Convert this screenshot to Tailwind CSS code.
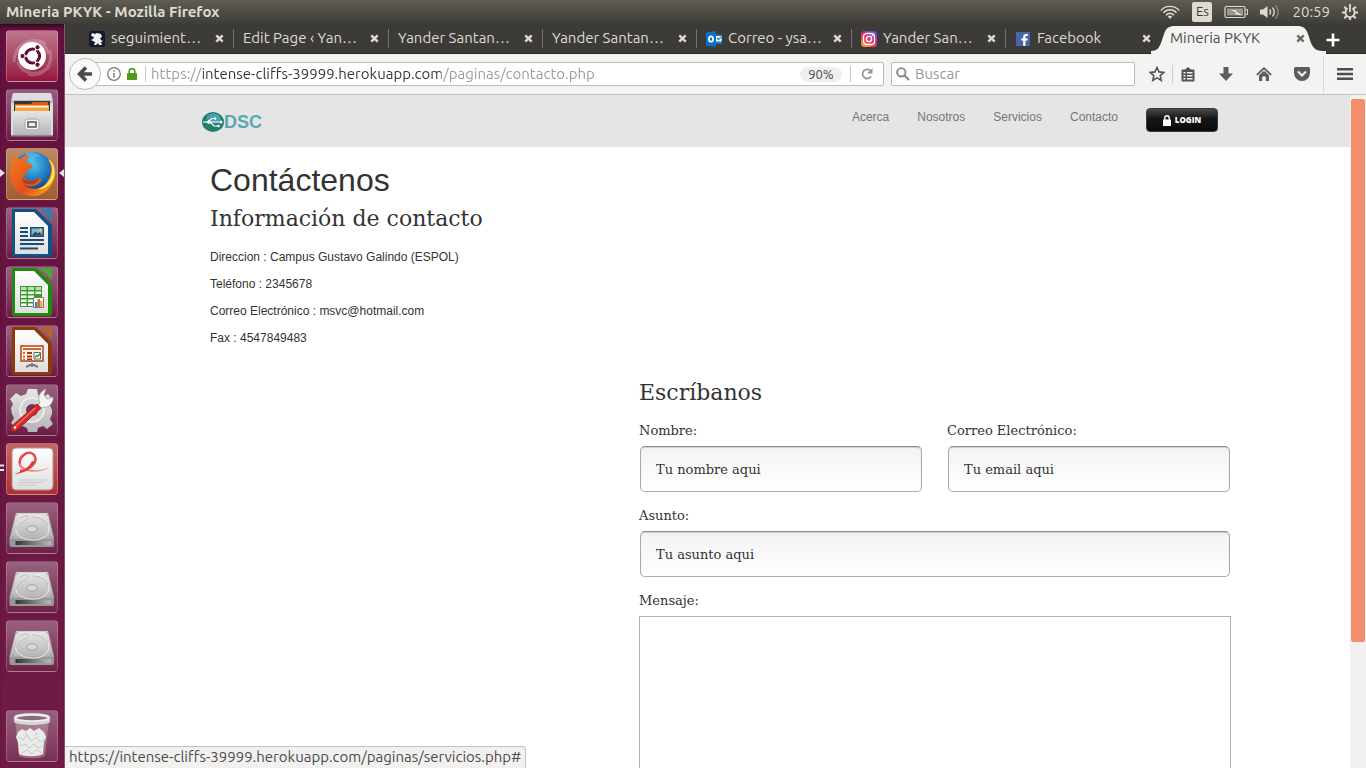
<!DOCTYPE html>
<html lang="es">
<head>
<meta charset="utf-8">
<title>Mineria PKYK</title>
<script src="https://cdn.jsdelivr.net/npm/@tailwindcss/browser@4"></script>
</head>
<body class="flex h-screen flex-col overflow-hidden bg-white font-['Ubuntu','Noto_Sans',sans-serif] text-[15px] text-[#4c4c4c]">

<!-- shared drawings -->
<svg class="absolute h-0 w-0" aria-hidden="true">
  <defs>
    <linearGradient id="metal" x1="0" y1="0" x2="0" y2="1"><stop offset="0" stop-color="#e6e6e6"/><stop offset="1" stop-color="#b4b4b4"/></linearGradient>
    <linearGradient id="paper" x1="0" y1="0" x2="0" y2="1"><stop offset="0" stop-color="#ffffff"/><stop offset="1" stop-color="#dedede"/></linearGradient>
    <linearGradient id="edge" x1="0" y1="0" x2="1" y2="0"><stop offset="0" stop-color="#333"/><stop offset="0.5" stop-color="#777"/><stop offset="1" stop-color="#bbb"/></linearGradient>
    <radialGradient id="globe" cx="0.5" cy="0.3" r="0.7"><stop offset="0" stop-color="#4fc3ee"/><stop offset="0.6" stop-color="#1a6fb5"/><stop offset="1" stop-color="#0b2f66"/></radialGradient>
    <linearGradient id="fox" x1="0" y1="0" x2="1" y2="1"><stop offset="0" stop-color="#f47c20"/><stop offset="0.6" stop-color="#e2501a"/><stop offset="1" stop-color="#f9c21c"/></linearGradient>
    <linearGradient id="insta" x1="0" y1="1" x2="0.7" y2="0"><stop offset="0" stop-color="#fdc24a"/><stop offset="0.35" stop-color="#f0533f"/><stop offset="0.65" stop-color="#d62c8e"/><stop offset="1" stop-color="#5b4fd0"/></linearGradient>
    <symbol id="disk" viewBox="0 0 52 52">
      <path d="M10 11h32l6 26H3.500z" fill="url(#metal)" stroke="#8f8f8f" stroke-width="0.500"/>
      <path d="M3.500 37H48v6c0 1-.5 2-2 2H5.500c-1.500 0-2-1-2-2z" fill="#989898"/>
      <path d="M9.500 39H45v4H9.500z" fill="url(#edge)"/>
      <path d="M14 15c6-4 9-2 8 0-1 3-11 4-12 12-1 7 8 11 17 11 12 0 18-7 15-15-2-6-8-9-15-9" fill="none" stroke="#efefef" stroke-width="1"/>
      <path d="M14 16c6-4 9-2 8 0-1 3-11 4-12 12M42 24c-2-6-8-9-15-9" fill="none" stroke="#aaa" stroke-width="0.700"/>
      <ellipse cx="26" cy="27" rx="5.500" ry="3.200" fill="#d8d8d8" stroke="#a2a2a2"/>
      <circle cx="7" cy="35" r="0.800" fill="#888"/><circle cx="45" cy="35" r="0.800" fill="#888"/><circle cx="11" cy="13" r="0.700" fill="#888"/><circle cx="41" cy="13" r="0.700" fill="#888"/>
    </symbol>
    <symbol id="cross" viewBox="0 0 9 9"><path d="M1.300 1.300l6.400 6.400M7.700 1.300L1.300 7.700" stroke="currentColor" stroke-width="2.400" fill="none"/></symbol>
  </defs>
</svg>

<!-- system panel -->
<header class="flex h-6 shrink-0 items-center bg-linear-to-b from-[#5f5d52] to-[#3e3d38] pl-[6px] pr-2 text-[#dfdbd2]">
  <h1 class="flex-1 text-[15px] leading-6 font-bold">Mineria PKYK - Mozilla Firefox</h1>
  <div class="flex items-center">
    <svg class="mr-3 h-4 w-5" viewBox="0 0 20 16" fill="none" stroke="#dfdbd2" stroke-width="1.500" role="img" aria-label="Wi-Fi"><path d="M.8 6.500C5.500 1 14.500 1 19.200 6.500" stroke-width="1.200"/><path d="M3.500 8.800c3.600-4 9.400-4 13 0"/><path d="M6 11.200c2.400-2.600 5.600-2.600 8 0"/><path d="M7.800 12.600c1.500-1.400 2.900-1.400 4.400 0L10 15z" fill="#dfdbd2" stroke="none"/></svg>
    <span class="mr-3 flex h-5 w-5 items-center justify-center rounded-[2px] bg-[#dfdbd2] text-[13px] text-[#3c3b37]">Es</span>
    <svg class="mr-3 h-4 w-6" viewBox="0 0 24 16" role="img" aria-label="Batería"><rect x="1" y="2.500" width="20" height="11" rx="1.500" fill="none" stroke="#dfdbd2" stroke-width="1.200"/><path d="M22 5.500h1.500v5H22" fill="none" stroke="#dfdbd2"/><path d="M3 4.500h16v7H3z" fill="#99968d"/><path d="M6 5.500l7 1.200-1 1.300 7 3.500-8-1.600 1.200-1.600z" fill="#fff"/></svg>
    <svg class="mr-3 h-4 w-5" viewBox="0 0 20 16" fill="none" stroke="#dfdbd2" stroke-width="1.400" role="img" aria-label="Volumen"><path d="M0 5.500h3L7.500 2v12L3 10.500H0z" fill="#dfdbd2" stroke="none"/><path d="M9.500 5.500c1.300 1.600 1.300 3.400 0 5M12.500 3.500c2.200 2.800 2.200 6.200 0 9"/><path d="M15.500 1.500c3.300 4 3.300 9 0 13" stroke="#8c897f"/></svg>
    <time class="mr-3">20:59</time>
    <svg class="h-4 w-4" viewBox="0 0 16 16" role="img" aria-label="Sistema"><g stroke="#dfdbd2" stroke-width="2.200"><path d="M8 13v3M0 8.500h3M13 8.500h3M2.300 14.200l2.200-2.200M13.700 14.200L11.500 12M2.300 2.800L4.500 5M13.700 2.800L11.500 5"/></g><path d="M5.600 4.600a4.600 4.600 0 1 0 4.800 0" fill="none" stroke="#dfdbd2" stroke-width="1.800"/><path d="M8 0v8" stroke="#dfdbd2" stroke-width="1.800"/></svg>
  </div>
</header>

<div class="flex min-h-0 flex-1">

<!-- launcher -->
<nav aria-label="Lanzador" class="flex w-[65px] shrink-0 flex-col justify-between border-r border-[#8b5278] bg-linear-to-b from-[#64113f] to-[#6f1b45] pt-[6px] pb-[6px] pl-[6px] shadow-[inset_0_5px_5px_-3px_#2c061b]">
  <div class="flex flex-col gap-[7px]">
    <a href="#" aria-label="Inicio" class="block h-[52px] w-[52px] rounded border border-white/25 bg-linear-to-b from-[#bd7590] to-[#96123f]">
      <svg viewBox="1 1 50 50"><path d="M8 32C8 16 24 5 40 14M13 20C20 8 38 8 43 24M44 20c4 16-8 28-22 24M12 32c4 12 20 16 32 4" fill="none" stroke="#fff" stroke-opacity=".22" stroke-width="3"/><circle cx="26" cy="26" r="14" fill="#fff"/><circle cx="26.500" cy="26" r="7" fill="none" stroke="#5e1036" stroke-width="3.200"/><path d="M26 26H16M26 26l5.500-9M26 26l5.500 9" stroke="#fff" stroke-width="1.500"/><circle cx="26.500" cy="26" r="5.200" fill="#fff"/><g fill="#5e1036" stroke="#fff" stroke-width="1"><circle cx="16.500" cy="26" r="2.600"/><circle cx="31.500" cy="17.300" r="2.600"/><circle cx="31.500" cy="34.700" r="2.600"/></g></svg>
    </a>
    <a href="#" aria-label="Archivos" class="block h-[52px] w-[52px] rounded border border-white/20 bg-linear-to-b from-[#9a5f80] to-[#6b1a47]">
      <svg viewBox="1 1 50 50"><path d="M7 4h38l2 8v34H5V12z" fill="#dedede"/><path d="M5 11h42v3H5z" fill="#bcbcbc"/><path d="M8 12h36v11H8z" fill="#3a3835"/><path d="M9 15h16l2-2h15v9H9z" fill="#cf5f22"/><path d="M9 16h34v6H9z" fill="#f2a443"/><path d="M10 17h32v1.500H10z" fill="#fff3d8"/><path d="M7 22h38v25H7z" fill="url(#metal)"/><path d="M5 46h42v1.500H5z" fill="#8a8a8a"/><rect x="19" y="30" width="14" height="11" rx="2.500" fill="#f1f1f1" stroke="#a5a5a5"/><rect x="22" y="33" width="8" height="5" fill="#eee" stroke="#555" stroke-width="1.500"/></svg>
    </a>
    <div class="relative h-[52px] w-[52px]">
      <a href="#" aria-label="Firefox" class="block h-[52px] w-[52px] rounded border border-white/25 bg-linear-to-b from-[#bd8a63] to-[#a05c30]">
        <svg viewBox="1 1 50 50"><circle cx="27" cy="25" r="21" fill="url(#globe)"/><path d="M20 5c6-2 13 0 15 4-5-1-8 2-6 5-4 1-6-2-9-2z" fill="#67d0f2" opacity=".5"/><path d="M7 12c0-2 1-4 2-5 1 3 3 4 6 4 2-3 5-4 9-3-3 2-4 5-3 7l6 2c0 3-3 3-5 5-1 3-3 4-4 6 1 6 10 6 16 2 2 1 2 2 0 4-5 6-15 6-19-1 5 9 20 11 26 1 5-7 5-16 1-23 6 4 8 13 6 20-3 10-11 17-21 17C13 48 4 39 4 27c0-6 1-11 3-15z" fill="url(#fox)"/><path d="M42 11c4 5 5 11 3 17-2 7-8 12-14 13 8 1 14-4 17-11 2-8 0-16-6-19z" fill="#fce45b"/><path d="M16 28c1 5 8 7 16 3 1 3-5 6-11 5-3 0-5-3-5-8z" fill="#b9371b"/></svg>
      </a>
      <svg class="absolute top-[21px] -left-[6px] h-2 w-[5px]" viewBox="0 0 5 8"><path d="M0 0l5 4-5 4z" fill="#e6dbe1"/></svg>
      <svg class="absolute top-[21px] left-[53px] h-2 w-[5px]" viewBox="0 0 5 8"><path d="M5 0L0 4l5 4z" fill="#e6dbe1"/></svg>
    </div>
    <a href="#" aria-label="Writer" class="block h-[52px] w-[52px] rounded border border-white/20 bg-linear-to-b from-[#98627f] to-[#6b1a47]">
      <svg viewBox="1 1 50 50"><path d="M6 2h24l16 16v29a3 3 0 0 1-3 3H9a3 3 0 0 1-3-3z" fill="#0f5283"/><path d="M34 2h12v12z" fill="#2f7eae"/><path d="M9 5h19l14 14v28H9z" fill="url(#paper)"/><g fill="#174f7b"><path d="M14 20h8v2h-8zM14 24h8v2h-8zM14 28h8v2h-8zM14 32h24v2H14zM14 36h24v2H14zM14 40.500h18v2H14z"/></g><path d="M24 20h14v10H24z" fill="#174f7b"/><path d="M25.500 21.500h11v7h-11z" fill="#79b8dc"/><path d="M25.500 28.500l4-4 2 2 2-1.500 3 3.500z" fill="#444"/><circle cx="34.500" cy="23" r="1.500" fill="#f4d02f"/></svg>
    </a>
    <a href="#" aria-label="Calc" class="block h-[52px] w-[52px] rounded border border-white/20 bg-linear-to-b from-[#98627f] to-[#6b1a47]">
      <svg viewBox="1 1 50 50"><path d="M6 2h24l16 16v29a3 3 0 0 1-3 3H9a3 3 0 0 1-3-3z" fill="#1f8a10"/><path d="M34 2h12v12z" fill="#46a937"/><path d="M9 5h19l14 14v28H9z" fill="url(#paper)"/><path d="M14 20h22v21H14z" fill="#3c9b2d"/><g fill="#b9e3ae"><path d="M15 21h5.500v3H15zM22 21h6v3h-6zM29.500 21H35v3h-5.500z"/></g><g fill="#f5fff2"><path d="M15 25.500h5.500v2.500H15zM22 25.500h6v2.500h-6zM29.500 25.500H35v2.500h-5.500zM15 29.500h5.500V32H15zM22 29.500h6V32h-6zM15 33.500h5.500V36H15zM22 33.500h5V36h-5zM15 37.500h5.500V40H15zM22 37.500h5V40h-5z"/></g><path d="M27.500 31.500h10v10h-10z" fill="#fff" stroke="#777"/><path d="M29 36h2.500v5H29z" fill="#1c8ad0"/><path d="M31.500 33H34v8h-2.500z" fill="#e3662b"/><path d="M34 35h2.500v6H34z" fill="#e8b53b"/></svg>
    </a>
    <a href="#" aria-label="Impress" class="block h-[52px] w-[52px] rounded border border-white/20 bg-linear-to-b from-[#98627f] to-[#6b1a47]">
      <svg viewBox="1 1 50 50"><path d="M6 2h24l16 16v29a3 3 0 0 1-3 3H9a3 3 0 0 1-3-3z" fill="#8d3b0a"/><path d="M34 2h12v12z" fill="#b5622c"/><path d="M9 5h19l14 14v28H9z" fill="url(#paper)"/><path d="M26 38v4M20 42l6-3 6 3" fill="none" stroke="#777" stroke-width="2"/><path d="M15 21h22v15H15z" fill="#fff3ec" stroke="#aa4a14" stroke-width="1.500"/><path d="M17 23h18v2H17z" fill="#d9632b"/><path d="M17 27h2v2h-2zM17 30.500h2v2h-2zM17 33.500h2v1.500h-2z" fill="#d9632b"/><path d="M21 27h5v2h-5zM21 30.500h5v2h-5zM21 33.500h5v1.500h-5z" fill="#9a3c0c"/><path d="M28 27.500h6.500V34H28z" fill="#fff" stroke="#666"/><path d="M29 32.500l2-2 1 .8 2-2.500" fill="none" stroke="#39922f" stroke-width="1.500"/></svg>
    </a>
    <a href="#" aria-label="Configuración" class="block h-[52px] w-[52px] rounded border border-white/20 bg-linear-to-b from-[#98627f] to-[#6b1a47]">
      <svg viewBox="1 1 50 50"><path d="M22 5h9l1 6 5 2 5-3 5 6-3 5 2 5v4l-2 5 3 5-6 5-4-3-5 2-1 4h-9l-1-4-5-2-5 3-6-6 3-5-2-4-1-6 2-4-3-5 6-6 5 3 5-2z" fill="url(#metal)"/><circle cx="26" cy="26" r="12" fill="#d2d2d2" stroke="#f4f4f4" stroke-width="1.500"/><circle cx="26" cy="26" r="6" fill="#74345a"/><path d="M31 22l3-3c-3-6 0-12 6-14l-2 6 3 4 6-2c1 6-5 12-11 10l-2 3z" fill="#f4f4f4" stroke="#999" stroke-width="0.700"/><path d="M31 20l4 4-25 23c-3 2-7-2-4-5z" fill="#d92b2b" stroke="#961818"/><path d="M29 24L10 42" stroke="#f06a60" stroke-width="1.500"/><circle cx="9" cy="43.500" r="1.200" fill="#fff"/></svg>
    </a>
    <div class="relative h-[52px] w-[52px]">
      <a href="#" aria-label="Visor de documentos" class="block h-[52px] w-[52px] rounded border border-white/25 bg-linear-to-b from-[#c96464] to-[#ac2f31]">
        <svg viewBox="1 1 50 50"><rect x="6" y="5" width="41" height="42" rx="4" fill="url(#paper)" stroke="#aa9696"/><path d="M14 22C12 13 23 6 28 12c5 7-4 15-14 16" fill="none" stroke="#e8484a" stroke-width="2.500"/><path d="M14 19c2 8 16 11 30 5-9 6-25 7-31-1z" fill="#f08583"/><path d="M26 18c-2 5-8 10-18 13 9 0 18-5 21-12z" fill="#dc3a3c"/><path d="M12 37h28M12 39.500h25M12 42h18" stroke="#c9c9c9"/></svg>
      </a>
      <svg class="absolute top-[21px] -left-[6px] h-2 w-[5px]" viewBox="0 0 5 8"><path d="M0 1.500h4M0 6h4" stroke="#eee6ea" stroke-width="2"/></svg>
    </div>
    <a href="#" aria-label="Disco 1" class="block h-[52px] w-[52px] rounded border border-white/20 bg-linear-to-b from-[#98627f] to-[#6f2149]"><svg viewBox="1 1 50 50"><use href="#disk" width="52" height="52"/></svg></a>
    <a href="#" aria-label="Disco 2" class="block h-[52px] w-[52px] rounded border border-white/20 bg-linear-to-b from-[#98627f] to-[#6f2149]"><svg viewBox="1 1 50 50"><use href="#disk" width="52" height="52"/></svg></a>
    <a href="#" aria-label="Disco 3" class="block h-[52px] w-[52px] rounded border border-white/20 bg-linear-to-b from-[#98627f] to-[#6f2149]"><svg viewBox="1 1 50 50"><use href="#disk" width="52" height="52"/></svg></a>
  </div>
  <a href="#" aria-label="Papelera" class="block h-[52px] w-[52px] rounded border border-white/20 bg-linear-to-b from-[#98627f] to-[#7a2e54]">
    <svg viewBox="1 1 50 50"><path d="M9 10h34l-4 36c-5 3-21 3-26 0z" fill="#d9c9d2" fill-opacity=".35"/><path d="M12 22l4-3 4 2 4-3 4 3 5-3 5 4 2 5-2 5-1 12c-5 3-18 3-24 0l-1-12-2-5z" fill="#e9ebe8"/><path d="M12 27l5 3 4-5 4 6 6-4 3 5 6-3M14 36l6-2 3 4 5-4 4 4 6-3M16 43l5-3 5 4 5-4 5 3M19 22l2 4M31 22l-2 4" fill="none" stroke="#c6c9c6"/><ellipse cx="26" cy="8" rx="17" ry="3.500" fill="#8d6a7c" stroke="#f0f0f0" stroke-width="2.500"/><path d="M8 9v3c3 4 33 4 36 0V9c-4 4-32 4-36 0z" fill="#d2d2d2"/></svg>
  </a>
</nav>

<!-- browser window -->
<div class="flex min-w-0 flex-1 flex-col">

  <!-- tab strip -->
  <div role="tablist" class="flex h-[30px] shrink-0 border-b border-[#2a2927] bg-[#3c3b37] pl-[14px] text-[#dfdbd2]">
    <div class="my-[5px] flex w-[155px] items-center border-r border-[#75736c] pr-[9px] pl-[10px]">
      <svg class="mr-[6px] h-4 w-4 shrink-0" viewBox="0 0 16 16"><rect width="16" height="16" rx="2" fill="#111a30"/><path d="M3 2l3 1 2-1 4 1 1 3-2 1 1 2 2 1-2 1 1 3h-3l-1-2-2 2H5l1-3-4-2 2-1 1-2-3-1z" fill="#f3f3f3"/></svg>
      <button role="tab" class="min-w-0 flex-1 text-left whitespace-nowrap">seguimient…</button>
      <button aria-label="Cerrar"><svg class="h-[9px] w-[9px]"><use href="#cross"/></svg></button>
    </div>
    <div class="my-[5px] flex w-[155px] items-center border-r border-[#75736c] pr-[9px] pl-[9px]">
      <button role="tab" class="min-w-0 flex-1 text-left whitespace-nowrap">Edit Page ‹ Yan…</button>
      <button aria-label="Cerrar"><svg class="h-[9px] w-[9px]"><use href="#cross"/></svg></button>
    </div>
    <div class="my-[5px] flex w-[154px] items-center border-r border-[#75736c] pr-[9px] pl-[9px]">
      <button role="tab" class="min-w-0 flex-1 text-left whitespace-nowrap">Yander Santan…</button>
      <button aria-label="Cerrar"><svg class="h-[9px] w-[9px]"><use href="#cross"/></svg></button>
    </div>
    <div class="my-[5px] flex w-[154px] items-center border-r border-[#75736c] pr-[9px] pl-[9px]">
      <button role="tab" class="min-w-0 flex-1 text-left whitespace-nowrap">Yander Santan…</button>
      <button aria-label="Cerrar"><svg class="h-[9px] w-[9px]"><use href="#cross"/></svg></button>
    </div>
    <div class="my-[5px] flex w-[155px] items-center border-r border-[#75736c] pr-[9px] pl-[9px]">
      <svg class="mr-[6px] h-4 w-4 shrink-0" viewBox="0 0 16 16"><path d="M9 3.500h7V13H9z" fill="#1377cc"/><path d="M10 5h5.500v5.500H10z" fill="#fff"/><path d="M11 7l1.500 1.500L15 6" fill="none" stroke="#1377cc" stroke-width="1.200"/><path d="M0 1.500L10 0v16L0 14.500z" fill="#0b6fc7"/><ellipse cx="5" cy="8" rx="2.100" ry="2.700" fill="none" stroke="#fff" stroke-width="1.700"/></svg>
      <button role="tab" class="min-w-0 flex-1 text-left whitespace-nowrap">Correo - ysa…</button>
      <button aria-label="Cerrar"><svg class="h-[9px] w-[9px]"><use href="#cross"/></svg></button>
    </div>
    <div class="my-[5px] flex w-[154px] items-center border-r border-[#75736c] pr-[9px] pl-[9px]">
      <svg class="mr-[6px] h-4 w-4 shrink-0" viewBox="0 0 16 16"><rect width="16" height="16" rx="4" fill="url(#insta)"/><g fill="none" stroke="#fff" stroke-width="1.300"><rect x="2.500" y="2.500" width="11" height="11" rx="3.200"/><circle cx="8" cy="8" r="2.600"/></g><circle cx="11.200" cy="4.800" r=".8" fill="#fff"/></svg>
      <button role="tab" class="min-w-0 flex-1 text-left whitespace-nowrap">Yander San…</button>
      <button aria-label="Cerrar"><svg class="h-[9px] w-[9px]"><use href="#cross"/></svg></button>
    </div>
    <div class="my-[5px] flex w-[145px] items-center pl-[10px]">
      <svg class="mr-[7px] h-[14px] w-[14px] shrink-0" viewBox="0 0 14 14"><rect width="14" height="14" fill="#4a64a5"/><path d="M7.200 14V8.600H5.300V6.400h1.900V4.800C7.200 3 8.300 2 10 2h1.800v2.100h-1.200c-.8 0-1.100.4-1.100 1v1.300h2.200l-.3 2.200H9.500V14z" fill="#fff"/></svg>
      <button role="tab" class="min-w-0 flex-1 text-left whitespace-nowrap">Facebook</button>
      <button aria-label="Cerrar"><svg class="h-[9px] w-[9px]"><use href="#cross"/></svg></button>
    </div>
    <div class="relative h-[30px] w-[175px] text-[#4c4c4c]">
      <svg class="absolute inset-0 h-[30px] w-[175px]" viewBox="0 0 175 30"><path d="M0 30V27c6 0 8-3 10-8l3-9c2-6 5-8 11-8H146c6 0 9 2 11 8l3 9c2 5 5 8 12 8h3v3z" fill="#f4f3f1"/></svg>
      <div class="relative flex h-[30px] items-center pr-[21px] pb-px pl-[19px]">
        <button role="tab" aria-selected="true" class="flex-1 text-left whitespace-nowrap">Mineria PKYK</button>
        <button aria-label="Cerrar" class="text-[#6b6a66]"><svg class="h-[9px] w-[9px]"><use href="#cross"/></svg></button>
      </div>
    </div>
    <button aria-label="Nueva pestaña" class="flex h-[30px] items-center pt-px text-white"><svg class="h-[14px] w-[14px]" viewBox="0 0 14 14"><path d="M7 .5v13M.5 7h13" stroke="#fff" stroke-width="2.600"/></svg></button>
  </div>

  <!-- navigation bar -->
  <div class="flex h-[41px] shrink-0 items-center border-b border-[#c4c2be] bg-[#f4f3f1] pl-1">
    <button aria-label="Atrás" class="z-10 flex h-8 w-8 shrink-0 items-center justify-center rounded-full border border-[#bcbab6] bg-[#fafaf9]">
      <svg class="h-4 w-4" viewBox="0 0 16 16"><path d="M9 1.500L2.500 8 9 14.500M3 8h12" fill="none" stroke="#4a4a4a" stroke-width="3.600"/></svg>
    </button>
    <div class="-ml-2 flex h-6 flex-1 items-center rounded-[2px] border border-[#bcbab6] bg-white pl-[13px] text-[#4c4c4c]">
      <svg class="mr-[6px] h-[14px] w-[14px] shrink-0" viewBox="0 0 14 14"><circle cx="7" cy="7" r="6.300" fill="none" stroke="#777" stroke-width="1.200"/><path d="M7 6v4.500M7 3.300v1.500" stroke="#777" stroke-width="1.500"/></svg>
      <svg class="h-3 w-[10px] shrink-0" viewBox="0 0 10 12"><path d="M2.200 6V3.500a2.800 2.800 0 0 1 5.600 0V6" fill="none" stroke="#4f9a1d" stroke-width="1.600"/><rect y="5" width="10" height="7" rx=".6" fill="#4f9a1d"/></svg>
      <span class="mr-[5px] ml-2 h-4 w-px bg-[#c8c8c8]"></span>
      <input aria-label="Dirección" class="min-w-0 flex-1 bg-[linear-gradient(90deg,#999_52px,#333_52px,#333_290px,#999_290px)] bg-clip-text text-transparent outline-none" value="https://intense-cliffs-39999.herokuapp.com/paginas/contacto.php">
      <button class="h-[15px] w-[42px] rounded-full bg-[#efefef] text-[13px] leading-[15px] text-[#4c4c4c]">90%</button>
      <span class="ml-2 h-4 w-px bg-[#c8c8c8]"></span>
      <button aria-label="Recargar" class="ml-[10px] mr-[10px]"><svg class="h-3 w-3" viewBox="0 0 12 12"><path d="M9.700 3A4.600 4.600 0 1 0 10 8.500" fill="none" stroke="#8d99a3" stroke-width="1.800"/><path d="M11.500 0v5.500H6z" fill="#8d99a3"/></svg></button>
    </div>
    <label class="ml-[7px] flex h-6 w-[244px] items-center rounded-[2px] border border-[#bcbab6] bg-white pl-1">
      <svg class="mr-[5px] h-[14px] w-[14px]" viewBox="0 0 14 14"><circle cx="5.300" cy="5.300" r="4.200" fill="none" stroke="#888" stroke-width="1.900"/><path d="M8.300 8.300L13 13" stroke="#888" stroke-width="2.200"/></svg>
      <input type="search" aria-label="Buscar" placeholder="Buscar" class="min-w-0 flex-1 outline-none placeholder:text-[#999]">
    </label>
    <button aria-label="Marcador" class="ml-[10px] flex w-6 justify-center"><svg class="h-4 w-4" viewBox="0 0 16 16"><path d="M8 1.500l2 4.400 4.800.5-3.600 3.200 1 4.700L8 11.900l-4.200 2.400 1-4.700L1.200 6.400 6 5.900z" fill="none" stroke="#555" stroke-width="1.600"/></svg></button>
    <span class="ml-[3px] h-[18px] w-px bg-[#cfcdc9]"></span>
    <button aria-label="Lista" class="mr-1 flex w-[30px] justify-center"><svg class="h-[15px] w-[14px]" viewBox="0 0 14 15"><path d="M1.500 2.500h11a1 1 0 0 1 1 1v10a1 1 0 0 1-1 1h-11a1 1 0 0 1-1-1v-10a1 1 0 0 1 1-1z" fill="#555"/><path d="M3.500 3L7 0l3.500 3z" fill="#555"/><path d="M2.500 5h2v1.500h-2zM6 5h5.500v1.500H6zM2.500 8h2v1.500h-2zM6 8h5.500v1.500H6zM2.500 11h2v1.500h-2zM6 11h5.500v1.500H6z" fill="#f4f3f1"/></svg></button>
    <button aria-label="Descargas" class="flex w-[38px] justify-center"><svg class="h-[14px] w-[14px]" viewBox="0 0 14 14"><path d="M4.500 0h5v6.500H14L7 14 0 6.500h4.500z" fill="#5c5c5c"/></svg></button>
    <button aria-label="Inicio" class="flex w-[38px] justify-center"><svg class="h-[14px] w-4" viewBox="0 0 16 14"><path d="M.8 7.800L8 1.200l7.200 6.600" fill="none" stroke="#555" stroke-width="1.700"/><path d="M3 8.200L8 3.700l5 4.500V14H9.800V9.500H6.200V14H3z" fill="#5c5c5c"/></svg></button>
    <button aria-label="Pocket" class="flex w-[38px] justify-center"><svg class="h-[14px] w-4" viewBox="0 0 16 14"><path d="M1.500 0h13A1.500 1.500 0 0 1 16 1.500V6a8 8 0 0 1-16 0V1.500A1.500 1.500 0 0 1 1.500 0z" fill="#5c5c5c"/><path d="M4 4.500l4 4 4-4" fill="none" stroke="#f4f3f1" stroke-width="2"/></svg></button>
    <span class="ml-[2px] h-9 w-px bg-[#d9d7d4]"></span>
    <button aria-label="Menú" class="flex w-[42px] justify-center"><svg class="h-3 w-4" viewBox="0 0 16 12"><path d="M0 1.200h16M0 6h16M0 10.800h16" stroke="#4c4c4c" stroke-width="2.400"/></svg></button>
  </div>

  <!-- viewport -->
  <div class="relative flex min-h-0 flex-1">
    <div class="min-w-0 flex-1 overflow-hidden bg-white font-['Liberation_Sans',sans-serif] text-[#333]">
      <div class="bg-[#e5e5e5]">
        <div class="mx-auto flex h-[52px] max-w-[1053px] items-start justify-between pr-4 pl-[21px]">
          <a href="#" aria-label="DSC" class="mt-4 flex h-[22px] items-center text-[18px] font-bold text-[#57a9b2]">
            <svg class="h-5 w-[22px]" viewBox="0 0 22 20"><ellipse cx="11" cy="10" rx="11" ry="10" fill="#22806f"/><path d="M5 4c4-4 12-3 14 3-2 4-4 5-8 4S4 8 5 4z" fill="#4b9fb5"/><path d="M1 10h17M6 10l4-3.500h2M8 10l4 4h4" fill="none" stroke="#fff" stroke-width="1.200"/><path d="M3.500 10l4-2.500v5z" fill="#fff"/><circle cx="13" cy="6.500" r="1.300" fill="#fff"/><circle cx="19" cy="10" r="1.500" fill="#fff"/><circle cx="16.500" cy="14" r="1.300" fill="#fff"/></svg><span>DSC</span>
          </a>
          <nav class="mt-[13px] flex items-start gap-7 text-[12px] text-[#777]">
            <a href="#" class="leading-[18px]">Acerca</a>
            <a href="#" class="leading-[18px]">Nosotros</a>
            <a href="#" class="leading-[18px]">Servicios</a>
            <a href="#" class="leading-[18px]">Contacto</a>
            <button class="flex h-6 w-[72px] items-center justify-center gap-1 rounded-[4px] border border-[#3a3a3a] bg-linear-to-b from-[#4a4a4a] via-[#151515] via-45% to-[#0c0c0c] font-['Open_Sans',sans-serif] text-[8px] font-extrabold text-white">
              <svg class="h-[11px] w-2" viewBox="0 0 8 11"><path d="M1.800 5V3a2.200 2.200 0 0 1 4.400 0v2" fill="none" stroke="#fff" stroke-width="1.400"/><rect y="4.500" width="8" height="6.500" fill="#fff"/></svg>LOGIN
            </button>
          </nav>
        </div>
      </div>

      <main class="mx-auto max-w-[1053px] pr-[3px] pl-[29px]">
        <section class="pt-[13px]">
          <h2 class="text-[32px] leading-10">Contáctenos</h2>
          <h3 class="mt-[5px] font-['DejaVu_Serif',serif] text-[22px] leading-7">Información de contacto</h3>
          <div class="mt-[15px] flex flex-col gap-[9px] text-[12px] leading-[18px]">
            <p>Direccion : Campus Gustavo Galindo (ESPOL)</p>
            <p>Teléfono : 2345678</p>
            <p>Correo Electrónico : msvc@hotmail.com</p>
            <p>Fax : 4547849483</p>
          </div>
        </section>

        <form class="mt-8 ml-auto w-[592px] font-['DejaVu_Serif',serif] text-[13px]">
          <h3 class="text-[22px] leading-7">Escríbanos</h3>
          <div class="mt-[14px] grid grid-cols-2 gap-x-6 gap-y-[14px] leading-5">
            <div>
              <label for="nombre" class="block">Nombre:</label>
              <div class="mt-[5px] px-px"><input id="nombre" value="Tu nombre aqui" class="block h-[46px] w-full rounded-[5px] border border-[#aaa] border-t-[#8c8c8c] bg-linear-to-b from-[#f3f3f3] to-white px-[15px] shadow-[inset_0_1px_1px_#ccc] outline-none"></div>
            </div>
            <div>
              <label for="correo" class="block">Correo Electrónico:</label>
              <div class="mt-[5px] px-px"><input id="correo" type="email" value="Tu email aqui" class="block h-[46px] w-full rounded-[5px] border border-[#aaa] border-t-[#8c8c8c] bg-linear-to-b from-[#f3f3f3] to-white px-[15px] shadow-[inset_0_1px_1px_#ccc] outline-none"></div>
            </div>
            <div class="col-span-2">
              <label for="asunto" class="block">Asunto:</label>
              <div class="mt-[5px] px-px"><input id="asunto" value="Tu asunto aqui" class="block h-[46px] w-full rounded-[5px] border border-[#aaa] border-t-[#8c8c8c] bg-linear-to-b from-[#f3f3f3] to-white px-[15px] shadow-[inset_0_1px_1px_#ccc] outline-none"></div>
            </div>
            <div class="col-span-2">
              <label for="mensaje" class="block">Mensaje:</label>
              <textarea id="mensaje" class="mt-[5px] block h-[220px] w-full resize-none border border-[#b4b4b4] bg-white p-2 outline-none"></textarea>
            </div>
          </div>
        </form>
      </main>
    </div>

    <div class="w-4 shrink-0 bg-[#f2f1ef] pt-1 pr-px pl-px"><div class="h-[543px] rounded-[2px] bg-[#f28e69]"></div></div>

    <div class="absolute bottom-0 left-0 flex h-[22px] items-center rounded-tr-[4px] border-t border-r border-[#c4c2be] bg-[#f2f1ef] px-1 whitespace-nowrap text-[#4c4c4c]">https://intense-cliffs-39999.herokuapp.com/paginas/servicios.php#</div>
  </div>
</div>
</div>
</body>
</html>
